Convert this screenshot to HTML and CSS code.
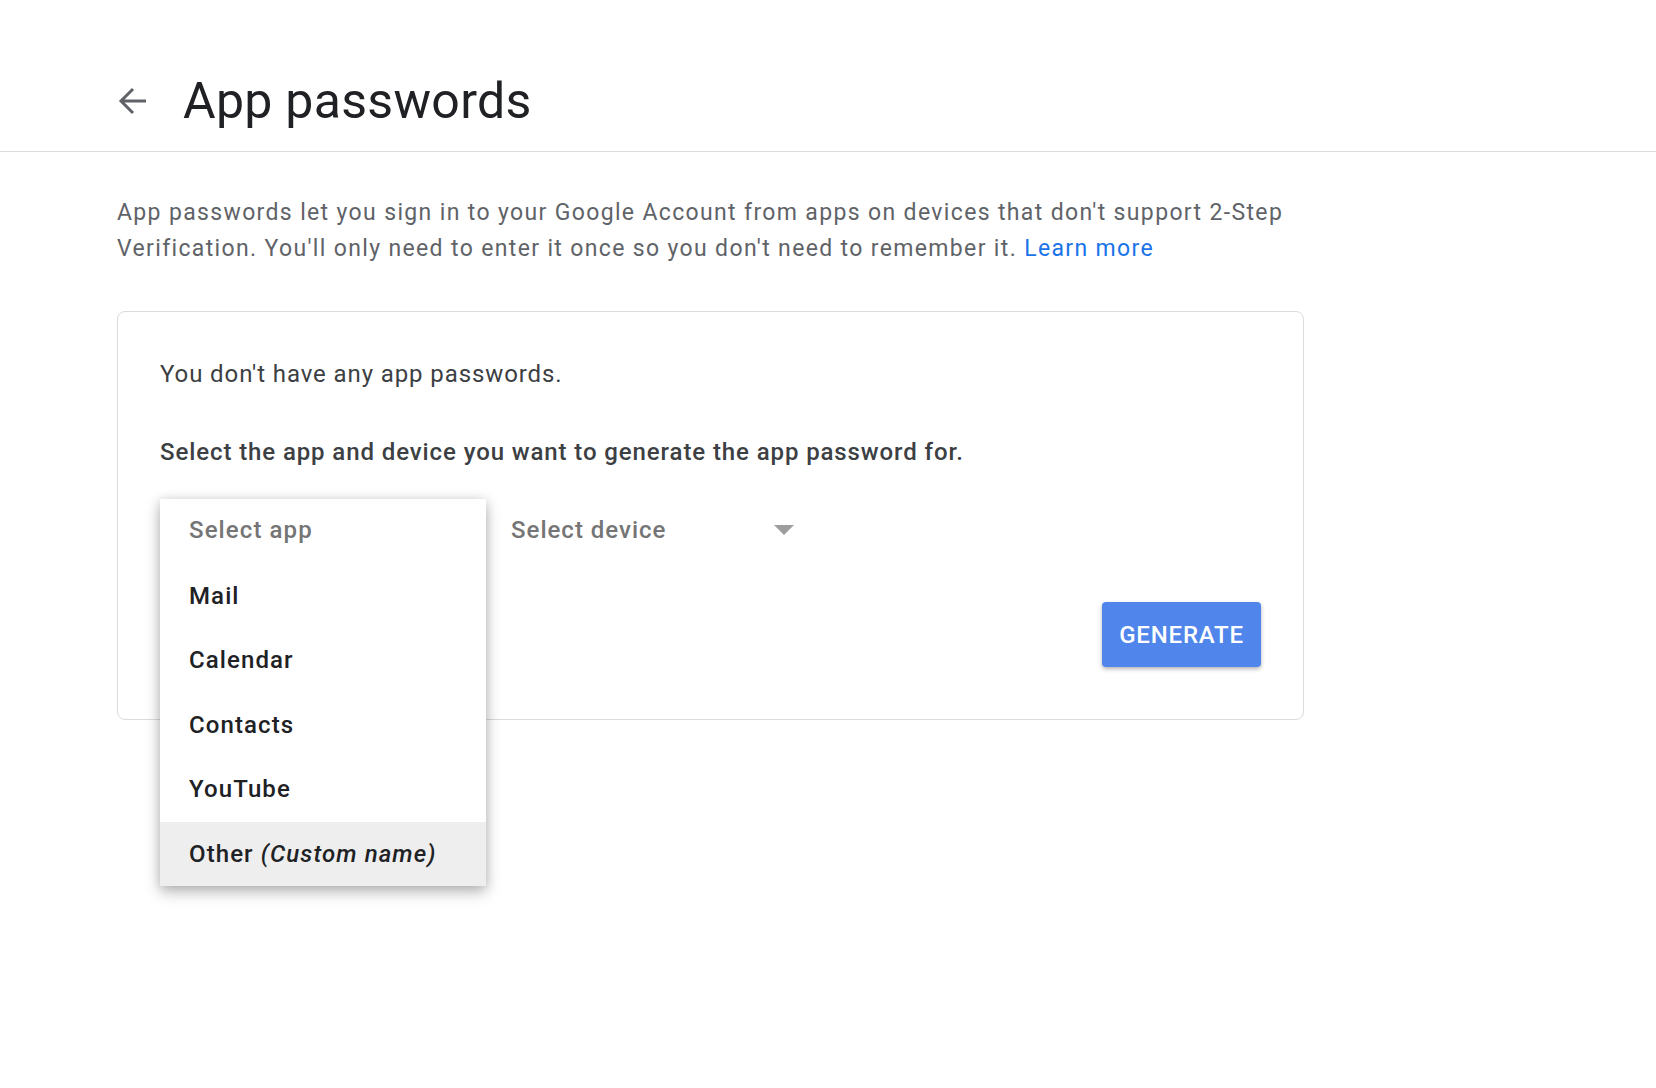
FILE: index.html
```html
<!DOCTYPE html>
<html lang="en">
<head>
<meta charset="utf-8">
<title>App passwords</title>
<link rel="stylesheet" href="styles.css">
</head>
<body>
<header class="topbar">
  <a class="back" href="#" aria-label="Back">
    <svg class="back-icon" viewBox="0 0 29 28" width="29" height="28" aria-hidden="true">
      <path d="M28 14H3M15 2L3 14l12 12" fill="none" stroke="#5f6368" stroke-width="3"/>
    </svg>
  </a>
  <h1 class="title">App passwords</h1>
</header>
<main class="content">
  <p class="intro">App passwords let you sign in to your Google Account from apps on devices that don't support 2-Step Verification. You'll only need to enter it once so you don't need to remember it. <a class="link" href="#">Learn more</a></p>
  <section class="card">
    <p class="empty">You don't have any app passwords.</p>
    <p class="instruct">Select the app and device you want to generate the app password for.</p>
    <div class="selects">
      <div class="select select-app">
        <ul class="menu">
          <li class="menu-item placeholder">Select app</li>
          <li class="menu-item">Mail</li>
          <li class="menu-item">Calendar</li>
          <li class="menu-item">Contacts</li>
          <li class="menu-item">YouTube</li>
          <li class="menu-item active">Other <em class="custom">(Custom name)</em></li>
        </ul>
      </div>
      <div class="select select-device">
        <span class="select-label">Select device</span>
        <span class="caret"></span>
      </div>
    </div>
    <div class="actions">
      <button class="generate" type="button">GENERATE</button>
    </div>
  </section>
</main>
</body>
</html>
```
FILE: styles.css
```css
* { box-sizing: border-box; }
html, body { margin: 0; padding: 0; background: #fff; }
body {
  font-family: Roboto, "Liberation Sans", Arial, sans-serif;
  color: #202124;
  width: 1656px;
  min-height: 1088px;
}
.topbar {
  display: flex;
  align-items: center;
  padding: 71px 0 20px 118px;
  border-bottom: 1px solid #dadce0;
}
.back { display: flex; width: 29px; height: 28px; margin-right: 36px; }
.back-icon { display: block; }
.title {
  margin: 0;
  font-size: 50px;
  line-height: 60px;
  font-weight: 400;
  color: #202124;
  letter-spacing: 0.3px;
}
.content { padding: 0 0 0 117px; }
.intro {
  margin: 43px 0 0;
  width: 1187px;
  font-size: 23px;
  line-height: 36px;
  letter-spacing: 1.35px;
  color: #5f6368;
}
.link { color: #1a73e8; text-decoration: none; }
.card {
  margin-top: 44px;
  width: 1187px;
  border: 1px solid #dadce0;
  border-radius: 8px;
  padding: 44px 42px 52px 42px;
}
.empty {
  margin: 0;
  font-size: 24px;
  line-height: 36px;
  letter-spacing: 0.9px;
  color: #3c4043;
}
.instruct {
  margin: 42px 0 0;
  font-size: 24px;
  line-height: 36px;
  letter-spacing: 0.9px;
  font-weight: 500;
  color: #3c4043;
}
.selects {
  display: flex;
  margin-top: 32px;
  height: 56px;
}
.select {
  position: relative;
  width: 326px;
  height: 56px;
  display: flex;
  align-items: center;
  font-size: 24px;
  letter-spacing: 1px;
  font-weight: 500;
  color: #757575;
}
.select-device { padding-left: 25px; padding-right: 18px; justify-content: space-between; }
.select-label { line-height: 56px; }
.caret {
  width: 0;
  height: 0;
  border-left: 10px solid transparent;
  border-right: 10px solid transparent;
  border-top: 10px solid #9e9e9e;
}
.menu {
  position: absolute;
  left: 0;
  top: -3px;
  width: 326px;
  margin: 0;
  padding: 0;
  list-style: none;
  background: #fff;
  box-shadow: 0 6px 14px rgba(0,0,0,0.28), 0 0 10px rgba(0,0,0,0.10);
  z-index: 2;
}
.menu-item {
  height: 64.5px;
  line-height: 64.5px;
  padding-left: 29px;
  font-size: 24px;
  letter-spacing: 1.1px;
  font-weight: 500;
  color: #202124;
  white-space: nowrap;
}
.menu-item.placeholder { color: #757575; line-height: 63px; }
.menu-item.active { background: #eeeeee; }
.custom { font-style: italic; font-weight: 500; }
.actions {
  display: flex;
  justify-content: flex-end;
  margin-top: 44px;
}
.generate {
  width: 159px;
  height: 65px;
  border: none;
  border-radius: 4px;
  background: #5086ec;
  color: #fff;
  font-family: Roboto, "Liberation Sans", Arial, sans-serif;
  font-size: 24px;
  font-weight: 500;
  letter-spacing: 0.8px;
  padding: 0;
  box-shadow: 0 2px 4px rgba(0,0,0,0.3);
}
```
